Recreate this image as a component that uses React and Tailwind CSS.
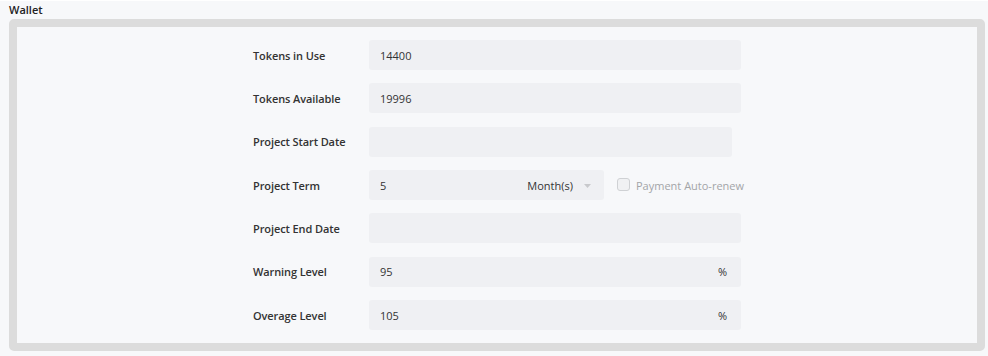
export default function App() {
  const labelCls = 'w-[116px] shrink-0 pt-[2px] text-[11px] font-semibold text-[#333] tracking-[-0.1px]';
  const boxCls = 'h-[30px] rounded-[3px] bg-[#eff0f3] flex items-center px-[11px] pt-[2px] text-[11px] text-[#333]';

  return (
    <div className="w-[988px] h-[356px] bg-[#f7f8fa] border-t border-white overflow-hidden" style={{ fontFamily: '"Open Sans", "Noto Sans", sans-serif' }}>
      <div className="h-[18px] pl-[9px] pt-[1px] text-[11px] font-semibold text-[#222] leading-[16px]">Wallet</div>

      <div className="ml-[9px] w-[976px] h-[332px] border-[8px] border-[#dcdcdc] rounded-[5px] bg-[#f7f8fa] pt-[13px]">
        <div className="w-[488px] mx-auto flex flex-col gap-[13.33px]">
          <div className="flex items-center">
            <div className={labelCls}>Tokens in Use</div>
            <div className={boxCls + ' flex-1'}>14400</div>
          </div>

          <div className="flex items-center">
            <div className={labelCls}>Tokens Available</div>
            <div className={boxCls + ' flex-1'}>19996</div>
          </div>

          <div className="flex items-center">
            <div className={labelCls}>Project Start Date</div>
            <div className={boxCls + ' w-[363px]'}></div>
          </div>

          <div className="flex items-center">
            <div className={labelCls}>Project Term</div>
            <div className={boxCls + ' w-[235px] shrink-0 justify-between pr-[13px]'}>
              <span>5</span>
              <span className="flex items-center gap-[11px]">
                Month(s)
                <svg width="7" height="4" viewBox="0 0 7 4">
                  <path d="M0 0 L7 0 L3.5 4 Z" fill="#c8c9cc" />
                </svg>
              </span>
            </div>
            <label className="ml-[13px] shrink-0 flex items-center gap-[6px] whitespace-nowrap text-[11px] text-[#a3a5a8]">
              <span className="w-[13px] h-[13px] rounded-[3px] border border-[#cfd1d4] bg-[#f0f1f3]" />
              <span className="pt-[2px]">Payment Auto-renew</span>
            </label>
          </div>

          <div className="flex items-center">
            <div className={labelCls}>Project End Date</div>
            <div className={boxCls + ' flex-1'}></div>
          </div>

          <div className="flex items-center">
            <div className={labelCls}>Warning Level</div>
            <div className={boxCls + ' flex-1 justify-between pr-[14px]'}>
              <span>95</span>
              <span>%</span>
            </div>
          </div>

          <div className="flex items-center">
            <div className={labelCls}>Overage Level</div>
            <div className={boxCls + ' flex-1 justify-between pr-[14px]'}>
              <span>105</span>
              <span>%</span>
            </div>
          </div>
        </div>
      </div>
    </div>
  );
}
